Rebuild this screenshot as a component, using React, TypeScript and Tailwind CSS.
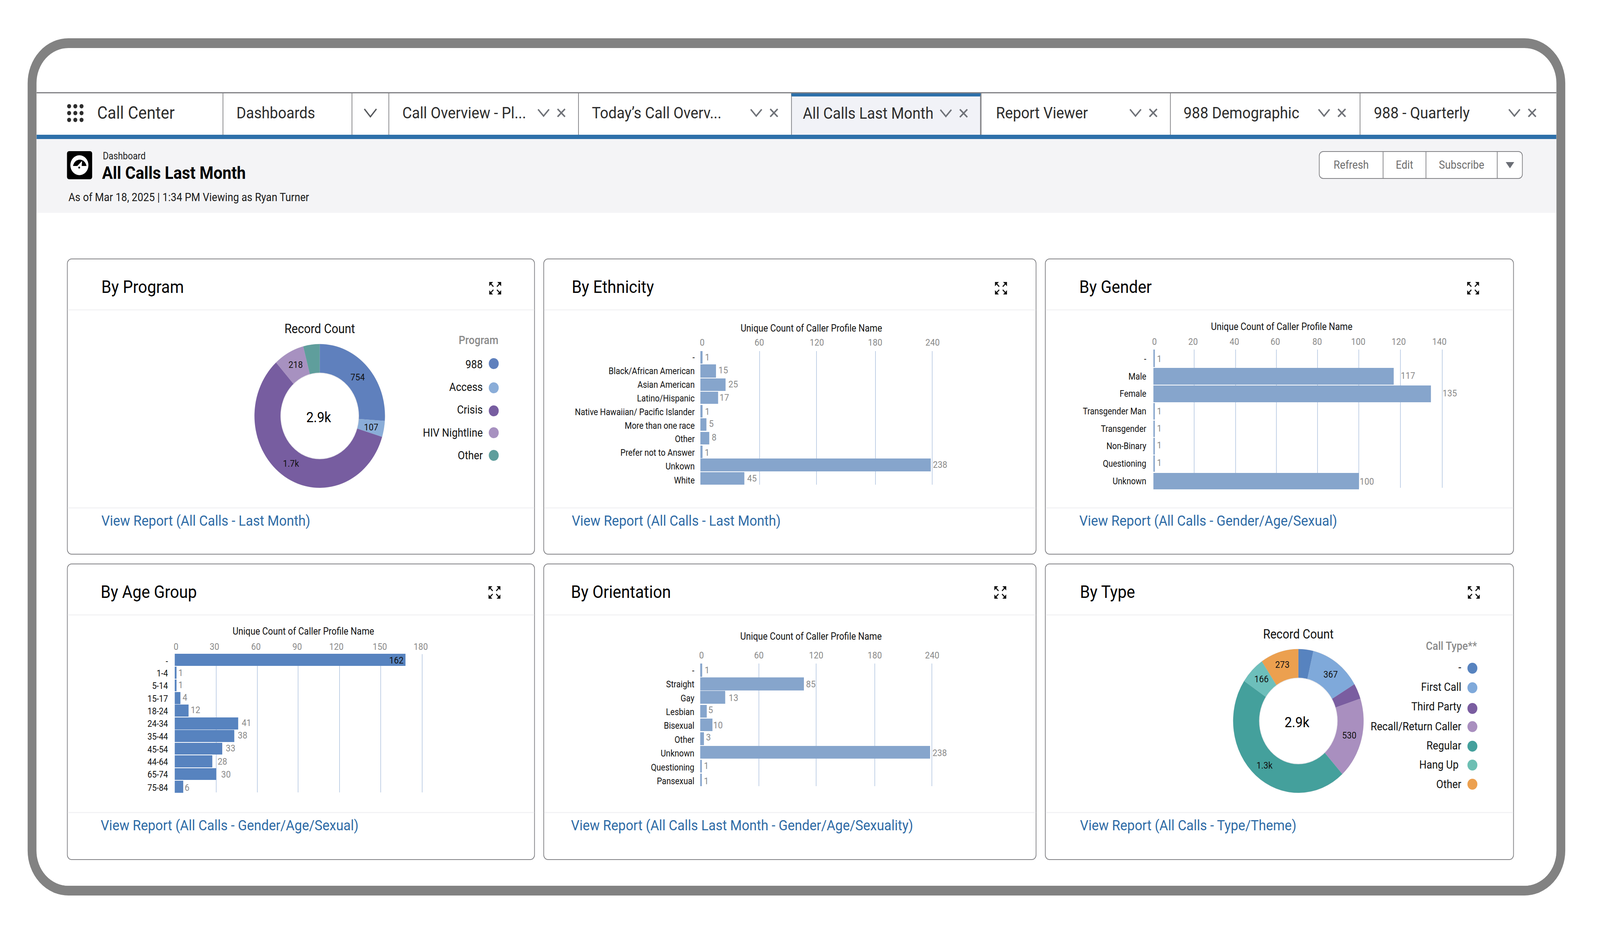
import React from "react";

type Slice = { to: number; color: string };
type Lab = { t: string; x: number; y: number };
type Leg = { t: string; tx: number; ty: number; cx: number; cy: number; color: string };
type Row = { l: string; ly: number; top: number; bot: number; end: number; v: string; vx: number; vy: number; inside?: boolean };

const GRAY = "#8a8a8a";

function arc(cx: number, cy: number, R: number, r: number, a0: number, a1: number) {
  const p = (rad: number, a: number) => {
    const t = ((a - 90) * Math.PI) / 180;
    return `${(cx + rad * Math.cos(t)).toFixed(2)} ${(cy + rad * Math.sin(t)).toFixed(2)}`;
  };
  const large = a1 - a0 > 180 ? 1 : 0;
  return `M${p(R, a0)} A${R} ${R} 0 ${large} 1 ${p(R, a1)} L${p(r, a1)} A${r} ${r} 0 ${large} 0 ${p(r, a0)} Z`;
}

function Donut(props: {
  cx: number; cy: number; titleY: number; centerX: number; centerY: number;
  slices: Slice[]; labels: Lab[]; legendTitle: string; legendTitleX: number; legendTitleY: number; legend: Leg[];
}) {
  const { cx, cy, slices } = props;
  let a = 0;
  return (
    <g>
      <text x={cx} y={props.titleY} textAnchor="middle" fontSize={33} fill="#111">Record Count</text>
      <circle cx={cx} cy={cy} r={184.5} fill="#d8d8dc" />
      {slices.map((s, i) => {
        const d = arc(cx, cy, 184, 110, a, s.to);
        a = s.to;
        return <path key={i} d={d} fill={s.color} />;
      })}
      <circle cx={cx} cy={cy} r={110} fill="#fff" stroke="#e4e4e8" strokeWidth={1.5} />
      <text x={props.centerX} y={props.centerY} textAnchor="middle" fontSize={37} fill="#000">2.9k</text>
      {props.labels.map((l) => (
        <text key={l.t} x={l.x} y={l.y + 8.5} textAnchor="middle" fontSize={24} fill="#111">{l.t}</text>
      ))}
      <text x={props.legendTitleX} y={props.legendTitleY} textAnchor="end" fontSize={29} fontWeight={500} fill={GRAY}>{props.legendTitle}</text>
      {props.legend.map((l) => (
        <g key={l.t}>
          <text x={l.tx} y={l.ty} textAnchor="end" fontSize={29} fill="#111">{l.t}</text>
          <circle cx={l.cx} cy={l.cy} r={14} fill={l.color} />
        </g>
      ))}
    </g>
  );
}

function Bars(props: {
  titleX: number; titleY: number; ticks: [string, number][]; tickY: number; grid: number[]; gridTop: number; gridBot: number;
  left: number; labelX: number; color: string; rows: Row[];
}) {
  return (
    <g>
      <text x={props.titleX} y={props.titleY} textAnchor="middle" fontSize={25} fill="#111">Unique Count of Caller Profile Name</text>
      {props.ticks.map(([t, x]) => (
        <text key={t} x={x} y={props.tickY} textAnchor="middle" fontSize={24} fill={GRAY}>{t}</text>
      ))}
      {props.grid.map((x) => (
        <line key={x} x1={x} x2={x} y1={props.gridTop} y2={props.gridBot} stroke="#a7bddc" strokeWidth={1.5} />
      ))}
      {props.rows.map((r) => (
        <g key={r.l}>
          <rect x={props.left} y={r.top} width={r.end - props.left} height={r.bot - r.top} fill={props.color} />
          <text x={props.labelX} y={r.ly + 8.5} textAnchor="end" fontSize={23} fill="#111">{r.l}</text>
          <text x={r.vx} y={r.vy + 8.5} fontSize={24} fill={r.inside ? "#111" : GRAY}>{r.v}</text>
        </g>
      ))}
    </g>
  );
}

function Expand({ cls }: { cls: string }) {
  return (
    <svg width={34} height={32} viewBox="0 0 34 32" className={cls}>
      <path d="M0 0h11L0 11zM34 0H23L34 11zM0 32h11L0 21zM34 32H23L34 21z" fill="#111" />
      <path d="M4 4l8 8M30 4l-8 8M4 28l8-8M30 28l-8-8" stroke="#111" strokeWidth={3} fill="none" />
    </svg>
  );
}

function Card(props: {
  title: string; link: string; pad: string; linkPad: string; iconCls: string; bodyCls: string;
  x: number; y: number; w: number; h: number; children: React.ReactNode;
}) {
  return (
    <section className="flex flex-col rounded-[13px] border-2 border-[#808084] bg-white">
      <header className={`flex h-[131px] shrink-0 items-start justify-between border-b-[3px] border-[#f3f3f5] pt-[47px] ${props.pad}`}>
        <h2 className="text-[45px] leading-[48px] font-normal text-black">{props.title}</h2>
        <Expand cls={props.iconCls} />
      </header>
      <div className={props.bodyCls}>
        <svg width={props.w} height={props.h} viewBox={`${props.x} ${props.y} ${props.w} ${props.h}`} className="block overflow-visible font-['Roboto']">
          {props.children}
        </svg>
      </div>
      <footer className={`flex-1 border-t-[3px] border-[#f3f3f5] pt-[9px] ${props.linkPad}`}>
        <a className="text-[37.5px] leading-[44px] text-[#2e6ba6]">{props.link}</a>
      </footer>
    </section>
  );
}

function TabIcons() {
  return (
    <span className="ml-auto flex shrink-0 items-center gap-[20px]">
      <svg width={35} height={22} viewBox="0 0 35 22"><path d="M2 2l15.5 17L33 2" fill="none" stroke="#6f7278" strokeWidth={4} /></svg>
      <svg width={25} height={22} viewBox="0 0 25 22"><path d="M2 1l21 20M23 1L2 21" fill="none" stroke="#6f7278" strokeWidth={4} /></svg>
    </span>
  );
}

function Tab(props: { label: string; cls: string }) {
  return (
    <div className={`flex h-full items-center border-l-2 border-[#808084] pb-[6px] text-[41.5px] text-[#2d2d2d] ${props.cls}`}>
      <span className="whitespace-nowrap">{props.label}</span>
      <TabIcons />
    </div>
  );
}

function GridDots() {
  const pts = [0, 1, 2];
  return (
    <svg width={47} height={47} viewBox="0 0 47 47" className="shrink-0">
      {pts.map((r) => pts.map((c) => <circle key={`${r}${c}`} cx={6 + c * 17.5} cy={6 + r * 17.5} r={5.6} fill="#2d2d2d" />))}
    </svg>
  );
}

const r2: Row[] = [
  { l: "-", ly: 915, top: 899, bot: 931, end: 1982, v: "1", vx: 1989, vy: 915 },
  { l: "Black/African American", ly: 950, top: 933, bot: 967, end: 2020, v: "15", vx: 2027, vy: 947.5 },
  { l: "Asian American", ly: 985, top: 969, bot: 1001, end: 2047, v: "25", vx: 2055, vy: 984 },
  { l: "Latino/Hispanic", ly: 1020, top: 1003, bot: 1034, end: 2026, v: "17", vx: 2030, vy: 1018 },
  { l: "Native Hawaiian/ Pacific Islander", ly: 1055, top: 1037, bot: 1069, end: 1982, v: "1", vx: 1989, vy: 1054 },
  { l: "More than one race", ly: 1090, top: 1071, bot: 1103, end: 1993, v: "5", vx: 2000, vy: 1085 },
  { l: "Other", ly: 1124, top: 1106, bot: 1138, end: 2001, v: "8", vx: 2008, vy: 1120 },
  { l: "Prefer not to Answer", ly: 1159, top: 1141, bot: 1173, end: 1982, v: "1", vx: 1988, vy: 1159 },
  { l: "Unkown", ly: 1194, top: 1174, bot: 1207, end: 2626, v: "238", vx: 2632, vy: 1190 },
  { l: "White", ly: 1229, top: 1209, bot: 1241, end: 2100, v: "45", vx: 2108, vy: 1225 },
];
const r3: Row[] = [
  { l: "-", ly: 919, top: 895, bot: 940, end: 3258, v: "1", vx: 3264, vy: 919 },
  { l: "Male", ly: 964, top: 942, bot: 985, end: 3932, v: "117", vx: 3952, vy: 962 },
  { l: "Female", ly: 1008, top: 987, bot: 1030, end: 4037, v: "135", vx: 4070, vy: 1007 },
  { l: "Transgender Man", ly: 1053, top: 1032, bot: 1074.5, end: 3258, v: "1", vx: 3264, vy: 1053 },
  { l: "Transgender", ly: 1098, top: 1077, bot: 1119, end: 3258, v: "1", vx: 3264, vy: 1097 },
  { l: "Non-Binary", ly: 1142, top: 1121, bot: 1164, end: 3258, v: "1", vx: 3264, vy: 1140 },
  { l: "Questioning", ly: 1187, top: 1166, bot: 1208, end: 3258, v: "1", vx: 3264, vy: 1185 },
  { l: "Unknown", ly: 1232, top: 1211, bot: 1253, end: 3834, v: "100", vx: 3836, vy: 1233 },
];
const r4: Row[] = [
  { l: "-", ly: 1693, top: 1674, bot: 1705, end: 1144, v: "162", vx: 1098, vy: 1691, inside: true },
  { l: "1-4", ly: 1724, top: 1707, bot: 1738, end: 498, v: "1", vx: 503, vy: 1723 },
  { l: "5-14", ly: 1756, top: 1740, bot: 1770, end: 498, v: "1", vx: 503, vy: 1754 },
  { l: "15-17", ly: 1788.5, top: 1772, bot: 1803, end: 509, v: "4", vx: 515, vy: 1786 },
  { l: "18-24", ly: 1821, top: 1804, bot: 1835, end: 532, v: "12", vx: 538, vy: 1818 },
  { l: "24-34", ly: 1853, top: 1837, bot: 1868, end: 672, v: "41", vx: 682, vy: 1851 },
  { l: "35-44", ly: 1886, top: 1869, bot: 1900, end: 661, v: "38", vx: 671, vy: 1883 },
  { l: "45-54", ly: 1918.6, top: 1902, bot: 1932, end: 627, v: "33", vx: 637, vy: 1915.5 },
  { l: "44-64", ly: 1951, top: 1934, bot: 1965, end: 599, v: "28", vx: 614, vy: 1950 },
  { l: "65-74", ly: 1983, top: 1967, bot: 1997, end: 610, v: "30", vx: 624, vy: 1983 },
  { l: "75-84", ly: 2016.5, top: 1999, bot: 2030, end: 517, v: "6", vx: 521, vy: 2016.5 },
];
const r5: Row[] = [
  { l: "-", ly: 1717, top: 1699, bot: 1733, end: 1981, v: "1", vx: 1988, vy: 1716 },
  { l: "Straight", ly: 1752, top: 1734.5, bot: 1768, end: 2268, v: "85", vx: 2274, vy: 1752 },
  { l: "Gay", ly: 1787.5, top: 1769, bot: 1802, end: 2046, v: "13", vx: 2056, vy: 1786.5 },
  { l: "Lesbian", ly: 1823, top: 1805, bot: 1837.5, end: 1994, v: "5", vx: 1998, vy: 1818 },
  { l: "Bisexual", ly: 1858, top: 1840, bot: 1872, end: 2010, v: "10", vx: 2012, vy: 1857 },
  { l: "Other", ly: 1894, top: 1875, bot: 1908, end: 1986, v: "3", vx: 1992, vy: 1888 },
  { l: "Unknown", ly: 1929, top: 1910, bot: 1942.5, end: 2624, v: "238", vx: 2631, vy: 1928 },
  { l: "Questioning", ly: 1964.5, top: 1945.6, bot: 1978, end: 1980, v: "1", vx: 1986, vy: 1961 },
  { l: "Pansexual", ly: 2000, top: 1981, bot: 2013, end: 1980, v: "1", vx: 1986, vy: 2000 },
];

export default function App() {
  return (
    <div className="h-[2389px] w-[4514px] origin-top-left scale-x-[0.9074] bg-white pt-[98px] pl-[78px] font-['Roboto',sans-serif]">
      <div className="flex h-[2195px] w-[4338px] flex-col overflow-hidden rounded-[115px] border-[25px] border-[#828282] bg-white">
        <div className="h-[113px] shrink-0" />
        <nav className="grid h-[109px] shrink-0 grid-cols-[525px_364px_104px_535px_601px_535px_534px_535px_555px] border-t-[3px] border-[#808084]">
          <div className="flex h-full items-center pb-[6px] pl-[86px]">
            <GridDots />
            <span className="ml-[38px] text-[45px] whitespace-nowrap text-[#2d2d2d]">Call Center</span>
          </div>
          <div className="flex h-full items-center border-l-2 border-[#808084] pb-[6px] pl-[37px] text-[41.5px] text-[#2d2d2d]">Dashboards</div>
          <div className="flex h-full items-center justify-center border-l-2 border-[#808084] pb-[6px]">
            <svg width={38} height={24} viewBox="0 0 38 24"><path d="M2 2l17 20L36 2" fill="none" stroke="#56585c" strokeWidth={3.5} /></svg>
          </div>
          <Tab label="Call Overview - Pl..." cls="pr-[35px] pl-[37px]" />
          <Tab label="Today’s Call Overv..." cls="pr-[36px] pl-[37px]" />
          <div className="flex h-full items-center border-x-2 border-t-[8px] border-x-[#808084] border-t-[#2d70aa] bg-[#f1f2f7] pr-[34px] pb-[12px] pl-[31px] text-[41.5px] text-[#2d2d2d]">
            <span className="whitespace-nowrap">All Calls Last Month</span>
            <TabIcons />
          </div>
          <Tab label="Report Viewer" cls="border-l-0 pr-[35px] pl-[41px]" />
          <Tab label="988 Demographic" cls="pr-[38px] pl-[36px]" />
          <Tab label="988 - Quarterly" cls="pr-[56px] pl-[38px]" />
        </nav>
        <div className="h-[11px] shrink-0 bg-[#2d70aa]" />
        <div className="flex h-[189px] shrink-0 items-start justify-between bg-[#f4f4f6] pt-[31px] pr-[95px] pl-[86px]">
          <div>
            <div className="flex">
              <div className="flex h-[72px] w-[71px] items-center justify-center rounded-[6px] bg-black">
                <svg width={71} height={72} viewBox="0 0 71 72">
                  <circle cx={35} cy={36} r={25.5} fill="#fff" />
                  <path d="M17 38A19.5 21 0 0 1 55 38Z" fill="#000" />
                  <path d="M42.7 25L41 42A7 7 0 1 1 28 39Z" fill="#fff" />
                  <circle cx={34.5} cy={42} r={2.6} fill="#000" />
                </svg>
              </div>
              <div className="ml-[28px] -mt-[1px]">
                <div className="ml-[2px] text-[25px] leading-[28px] text-[#222]">Dashboard</div>
                <h1 className="mt-[4px] text-[45px] leading-[50px] font-bold text-black">All Calls Last Month</h1>
              </div>
            </div>
            <p className="mt-[21px] pl-[4px] text-[29px] leading-[32px] text-[#1a1a1a]">As of Mar 18, 2025 | 1:34 PM Viewing as Ryan Turner</p>
          </div>
          <div className="flex h-[71px] items-stretch rounded-[12px] border-2 border-[#808084] bg-white text-[29px] text-[#6e6e6e]">
            <span className="flex w-[178px] items-center justify-center">Refresh</span>
            <span className="flex w-[121px] items-center justify-center border-l-2 border-[#808084]">Edit</span>
            <span className="flex w-[201px] items-center justify-center border-l-2 border-[#808084]">Subscribe</span>
            <span className="flex w-[71px] items-start justify-center border-l-2 border-[#808084] pt-[26px]">
              <svg width={24} height={16} viewBox="0 0 24 16"><path d="M0 0h24L12 16z" fill="#6b6e75" /></svg>
            </span>
          </div>
        </div>
        <main className="grid flex-1 grid-cols-[1320px_1391px_1323px] grid-rows-[758px_759px] gap-x-[24px] gap-y-[23px] bg-white pt-[117px] pl-[86px]">
          <Card title="By Program" link="View Report (All Calls - Last Month)" pad="pl-[95px] pr-[93px]" linkPad="pl-[95px]" iconCls="mt-[11px]" bodyCls="h-[504px]" x={191} y={795} w={1316} h={504}>
            <Donut cx={902} cy={1065} titleY={853} centerX={899} centerY={1081}
              slices={[{ to: 94, color: "#5f80bd" }, { to: 107, color: "#8aadd8" }, { to: 318, color: "#775da0" }, { to: 345.4, color: "#a791c0" }, { to: 360, color: "#5f9e9c" }]}
              labels={[{ t: "754", x: 1009, y: 966 }, { t: "107", x: 1047, y: 1094 }, { t: "218", x: 834, y: 934 }, { t: "1.7k", x: 821, y: 1187 }]}
              legendTitle="Program" legendTitleX={1406} legendTitleY={881}
              legend={[
                { t: "988", tx: 1362, ty: 943, cx: 1393, cy: 931, color: "#5f80bd" },
                { t: "Access", tx: 1362, ty: 1001, cx: 1393, cy: 993, color: "#8aadd8" },
                { t: "Crisis", tx: 1362, ty: 1059.5, cx: 1393, cy: 1052, color: "#775da0" },
                { t: "HIV Nightline", tx: 1362, ty: 1118, cx: 1393, cy: 1108, color: "#a791c0" },
                { t: "Other", tx: 1362, ty: 1176, cx: 1393, cy: 1166, color: "#5f9e9c" },
              ]} />
          </Card>
          <Card title="By Ethnicity" link="View Report (All Calls - Last Month)" pad="pl-[78px] pr-[81px]" linkPad="pl-[78px]" iconCls="mt-[11px]" bodyCls="h-[504px]" x={1535} y={795} w={1387} h={504}>
            <Bars titleX={2289} titleY={849} tickY={885} ticks={[["0", 1981], ["60", 2142], ["120", 2304.5], ["180", 2469], ["240", 2631]]} grid={[2143, 2303.6, 2470, 2630]} gridTop={899} gridBot={1241} left={1976} labelX={1960} color="#86a5cc" rows={r2} />
          </Card>
          <Card title="By Gender" link="View Report (All Calls - Gender/Age/Sexual)" pad="pl-[95px] pr-[96px]" linkPad="pl-[95px]" iconCls="mt-[11px]" bodyCls="h-[504px]" x={2950} y={795} w={1319} h={504}>
            <Bars titleX={3616} titleY={845} tickY={883} ticks={[["0", 3257], ["20", 3366], ["40", 3482.5], ["60", 3598], ["80", 3716], ["100", 3832], ["120", 3946], ["140", 4061]]} grid={[3369, 3486, 3601, 3717, 3833.5, 3951, 4069]} gridTop={895} gridBot={1249} left={3254} labelX={3234} color="#86a5cc" rows={r3} />
          </Card>
          <Card title="By Age Group" link="View Report (All Calls - Gender/Age/Sexual)" pad="pl-[93px] pr-[95px]" linkPad="pl-[93px]" iconCls="mt-[9px]" bodyCls="h-[503px]" x={191} y={1576} w={1316} h={503}>
            <Bars titleX={856} titleY={1625} tickY={1664} ticks={[["0", 496.5], ["30", 605], ["60", 722], ["90", 838.5], ["120", 949], ["150", 1071.6], ["180", 1187]]} grid={[610, 726, 841, 958, 1074, 1191]} gridTop={1675} gridBot={2029} left={493} labelX={474} color="#5783bf" rows={r4} />
          </Card>
          <Card title="By Orientation" link="View Report (All Calls Last Month - Gender/Age/Sexuality)" pad="pl-[76px] pr-[83px]" linkPad="pl-[76px]" iconCls="mt-[9px]" bodyCls="h-[503px]" x={1535} y={1576} w={1387} h={503}>
            <Bars titleX={2288} titleY={1638} tickY={1686} ticks={[["0", 1979], ["60", 2141], ["120", 2302.6], ["180", 2468], ["240", 2630]]} grid={[2141, 2302.6, 2468, 2629]} gridTop={1699} gridBot={2013} left={1975.5} labelX={1959} color="#86a5cc" rows={r5} />
          </Card>
          <Card title="By Type" link="View Report (All Calls - Type/Theme)" pad="pl-[97px] pr-[94px]" linkPad="pl-[97px]" iconCls="mt-[9px]" bodyCls="h-[503px]" x={2950} y={1576} w={1319} h={503}>
            <Donut cx={3663} cy={1846} titleY={1635} centerX={3659} centerY={1862}
              slices={[{ to: 13.3, color: "#5783bf" }, { to: 59.3, color: "#7fa9da" }, { to: 71.9, color: "#7a5da0" }, { to: 137.7, color: "#a98fbf" }, { to: 303.8, color: "#44a09c" }, { to: 326, color: "#6dbfbb" }, { to: 360, color: "#eca04f" }]}
              labels={[{ t: "273", x: 3618, y: 1701.5 }, { t: "367", x: 3754, y: 1727 }, { t: "166", x: 3559, y: 1739 }, { t: "530", x: 3806.5, y: 1882.6 }, { t: "1.3k", x: 3567.6, y: 1960 }]}
              legendTitle="Call Type**" legendTitleX={4167} legendTitleY={1664}
              legend={[
                { t: "-", tx: 4122.6, ty: 1719.5, cx: 4154, cy: 1711, color: "#5783bf" },
                { t: "First Call", tx: 4122.6, ty: 1769, cx: 4154, cy: 1761, color: "#7fa9da" },
                { t: "Third Party", tx: 4122.6, ty: 1819, cx: 4154, cy: 1814, color: "#7a5da0" },
                { t: "Recall/Return Caller", tx: 4122.6, ty: 1870, cx: 4154, cy: 1860.6, color: "#a98fbf" },
                { t: "Regular", tx: 4122.6, ty: 1919, cx: 4154, cy: 1910.7, color: "#44a09c" },
                { t: "Hang Up", tx: 4115, ty: 1968, cx: 4154, cy: 1959, color: "#6dbfb3" },
                { t: "Other", tx: 4122.6, ty: 2018, cx: 4154, cy: 2008, color: "#eca04f" },
              ]} />
          </Card>
        </main>
      </div>
    </div>
  );
}
